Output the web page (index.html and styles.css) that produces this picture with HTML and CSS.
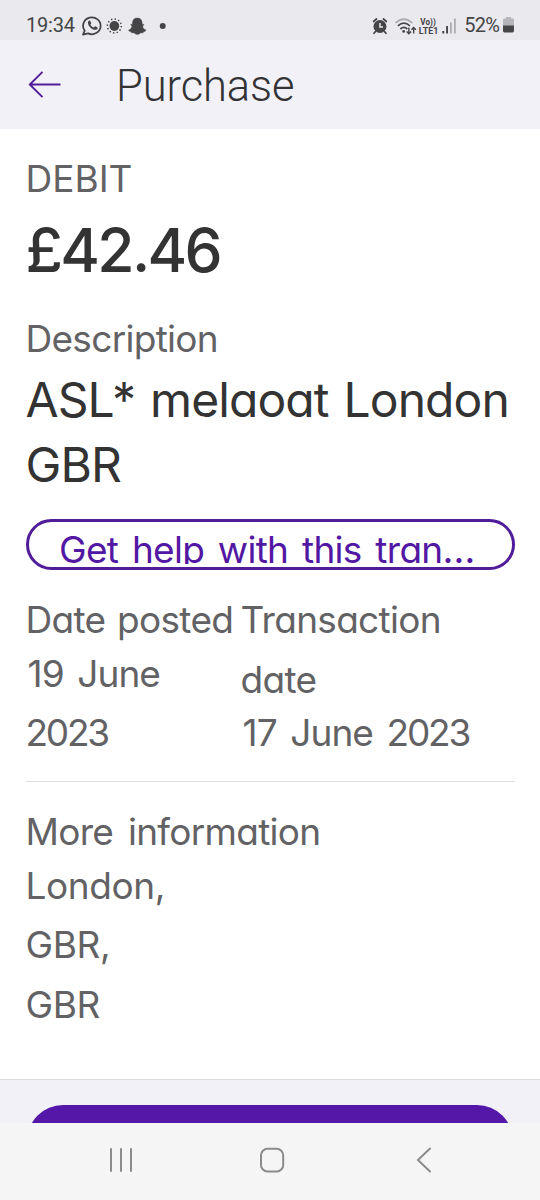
FILE: index.html
```
<!DOCTYPE html>
<html lang="en">
<head>
<meta charset="utf-8">
<title>Purchase</title>
<link rel="stylesheet" href="styles.css">
</head>
<body>
<div class="screen">
  <div class="status">
    <span class="clock">19:34</span>
    <svg class="status-left" width="94" height="24" viewBox="0 0 94 24">
      <g transform="translate(-.3 -.2) scale(1.060 1.020)">
        <path d="M3.800 17.500A8.300 8.300 0 1 1 7 20.200L2.200 21.400Z" fill="none" stroke="#454547" stroke-width="1.700" stroke-linejoin="round"/>
        <path d="M7.200 8.200c.9-.9 1.700-.7 2.100.2l.7 1.600c.2.500-.9 1.200-.7 1.600.7 1.300 1.700 2.200 3 2.700.5.200 1.100-1.200 1.600-1l1.700.9c.9.500.6 1.500-.3 2.100-3.600 2.200-10-4.500-8.100-8.100Z" fill="#454547"/>
      </g>
      <circle cx="33.500" cy="13" r="4.900" fill="#454547"/>
      <circle cx="33.500" cy="13" r="7" fill="none" stroke="#454547" stroke-width="1.500" stroke-dasharray="1.400 2.265"/>
      <path d="M56.500 5c3.300 0 4.800 2.100 4.800 4.800v1.700l1.700-.3c.3.900-.6 1.300-1.300 1.700.5 2.200 1.700 3.600 3.500 4.200-.1 1.100-1.300 1.400-2.500 1.600l-.4 1.200c-1.700-.4-2.700 0-3.700.9-1.300.9-2.900.9-4.200 0-1-.9-2-1.300-3.700-.9l-.4-1.200c-1.200-.2-2.400-.5-2.500-1.600 1.800-.6 3-2 3.500-4.200-.7-.4-1.600-.8-1.300-1.700l1.700.3V9.800c0-2.700 1.500-4.800 4.800-4.800Z" fill="#454547" stroke="#454547" stroke-width=".5"/>
      <circle cx="82" cy="13" r="3" fill="#454547"/>
    </svg>
    <svg class="status-right" width="88" height="24" viewBox="0 0 88 24">
      <circle cx="8" cy="13.500" r="6.500" fill="#454547"/>
      <path d="M1.600 8.500 4.500 6M14.400 8.500 11.500 6M3.500 18.500 2 20.300M12.500 18.500 14 20.300" stroke="#454547" stroke-width="1.800" stroke-linecap="round"/>
      <path d="M8 10v4h3" fill="none" stroke="#eae9ee" stroke-width="1.500"/>
      <g fill="none" stroke-width="1.700">
        <path d="M23.500 10Q32 2 40.500 10" stroke="#aaa9ad"/>
        <path d="M26 12.800Q32 7.400 38 12.800M28.500 16Q32 13 35.500 16" stroke="#454547"/>
        <path d="M37 14.500v6M34.800 18.500l2.200 2.300 2.200-2.300M41.800 20.500v-6M39.600 16.800l2.200-2.300 2.200 2.300" stroke="#454547" stroke-width="1.400"/>
      </g>
      <circle cx="31.800" cy="18.500" r="1.400" fill="#454547"/>
      <text x="48.500" y="11.800" class="volte" textLength="15.500" lengthAdjust="spacingAndGlyphs">Vo))</text>
      <text x="47" y="20.800" class="volte" textLength="19.500" lengthAdjust="spacingAndGlyphs">LTE1</text>
      <path d="M71.500 18v2.500M75.300 13v7.500" stroke="#454547" stroke-width="1.900"/>
      <path d="M79.200 9.500v11M83.200 5.500v15" stroke="#aaa9ad" stroke-width="1.700"/>
    </svg>
    <span class="percent">52%</span>
    <svg width="12" height="18" viewBox="0 0 12 18">
      <path d="M3 1h5v1.500h1.500Q11 2.500 11 4v6H0V4Q0 2.500 1.500 2.500H3Z" fill="#b5b4b8"/>
      <path d="M0 9.500h11V15q0 1.500-1.500 1.500h-8Q0 16.500 0 15Z" fill="#454547"/>
    </svg>
  </div>

  <header class="header">
    <svg class="back" width="34" height="30" viewBox="0 0 34 30">
      <path d="M32.500 14.500H2M14.500 1.800 1.800 14.500 14.500 27.200" fill="none" stroke="#501c99" stroke-width="1.900"/>
    </svg>
    <h1 class="title">Purchase</h1>
  </header>

  <main class="content">
    <div class="kind">DEBIT</div>
    <div class="amount">£42.46</div>
    <div class="label">Description</div>
    <div class="description">ASL* melaoat London GBR</div>
    <div class="help"><span class="help-text">Get help with this tran<span class="dots">…</span></span></div>
    <div class="dates">
      <div class="posted">
        <div class="row">Date posted</div>
        <div class="row value date">19 June <span class="year">2023</span></div>
      </div>
      <div class="transaction">
        <div class="row">Transaction date</div>
        <div class="row value date">17 June <span class="year">2023</span></div>
      </div>
    </div>
    <div class="more">
      <div class="row more-title">More information</div>
      <div class="row value">London,<br>GBR,<br>GBR</div>
    </div>
  </main>

  <footer class="footer"><div class="action"></div></footer>
  <nav class="nav">
    <svg width="540" height="77" viewBox="0 0 540 77" fill="none" stroke="#8b8b8b" stroke-width="2" stroke-linecap="round">
      <path d="M111 26v22M121 26v22M131 26v22"/>
      <rect x="261" y="25.800" width="22.200" height="22.600" rx="6.500"/>
      <path d="M430 25.500 418 37l12 11.500"/>
    </svg>
  </nav>
</div>
</body>
</html>
```
FILE: styles.css
```
* { box-sizing: border-box; }
body { margin: 0; background: #fff; }
.screen {
  width: 540px;
  height: 1200px;
  display: flex;
  flex-direction: column;
  overflow: hidden;
  font-family: Inter, "Open Sans", sans-serif;
  font-feature-settings: "cv11";
  color: #626265;
}
.status {
  height: 40px;
  flex: none;
  display: flex;
  align-items: center;
  padding: 10px 25px 0 26px;
  background: #eae9ee;
  color: #454547;
  font-family: Roboto, sans-serif;
}
.clock { font-size: 20px; width: 55px; letter-spacing: -0.200px; }
.status-left { margin-top: -1px; }
.status-right { margin-left: 198px; margin-top: -1px; }
.percent { font-size: 20px; letter-spacing: -0.700px; width: 39px; margin-left: 4px; white-space: nowrap; }
.volte { font: 700 9px Roboto, sans-serif; fill: #454547; }
.header {
  height: 89px;
  flex: none;
  display: flex;
  align-items: center;
  padding-left: 28px;
  background: #f2f1f7;
}
.back { flex: none; margin-right: 53px; }
.title {
  margin: 5px 0 0 1px;
  font: 300 43.500px/52px Roboto, sans-serif;
  letter-spacing: -0.100px;
  color: #333335;
}
.content {
  flex: none;
  height: 950px;
  padding: 20px 25.500px 0;
  font-size: 37px;
  letter-spacing: -0.700px;
  word-spacing: 2px;
}
.kind { line-height: 59px; letter-spacing: 0; }
.amount {
  height: 84px;
  font-size: 60.500px;
  font-weight: 500;
  line-height: 85px;
  letter-spacing: -2.700px;
  color: #333;
}
.label { margin-top: 17px; line-height: 59px; }
.description {
  font-size: 48px;
  line-height: 64.500px;
  letter-spacing: -0.900px;
  word-spacing: 2.300px;
  margin-right: -6px;
  color: #333;
}
.help {
  height: 51px;
  margin-top: 22px;
  padding: 0 31px;
  border: 3px solid #501c99;
  border-radius: 26px;
}
.help-text {
  display: block;
  height: 42px;
  overflow: hidden;
  line-height: 56px;
  letter-spacing: -0.700px;
  word-spacing: 4px;
  margin: 0 -6px 0 -0.500px;
  white-space: nowrap;
  color: #5217a3;
}
.dots { letter-spacing: 0; font-size: 38px; line-height: 1px; }
.dates {
  display: grid;
  grid-template-columns: 215px 1fr;
  height: 212px;
  padding-top: 20px;
  border-bottom: 1.500px solid #dfdfe1;
}
.row { line-height: 59.500px; }
.value { margin-top: -6px; }
.posted .value { width: 150px; }
.posted .row:first-child { white-space: nowrap; }
.transaction .row:first-child { width: 210px; }
.date { text-indent: 2px; letter-spacing: -0.900px; word-spacing: 4px; }
.year { letter-spacing: -2.200px; }
.more { padding-top: 20px; }
.more-title { word-spacing: 5px; }
.more .value { letter-spacing: -0.400px; }
.footer {
  height: 44px;
  flex: none;
  padding: 25px 27px 0;
  overflow: hidden;
  background: #f2f1f7;
  border-top: 1px solid #d9d9de;
}
.action { height: 72px; border-radius: 36px; background: #5417a8; }
.nav { height: 77px; flex: none; background: #f5f5f5; }
.nav svg { display: block; }
```
